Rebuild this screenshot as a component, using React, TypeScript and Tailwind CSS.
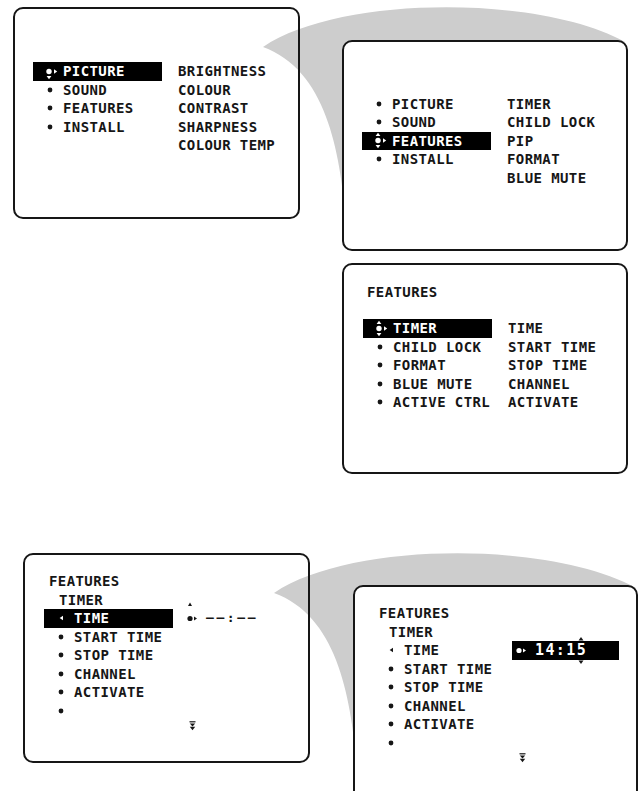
import type {ReactNode} from 'react'

const font = "font-['DejaVu_Sans_Mono',monospace] text-[14px] font-bold tracking-[0.4px] leading-[18.5px] text-[#161616]"

function Bullet() {
  return (
    <svg width="12" height="12" viewBox="0 0 12 12">
      <circle cx="6" cy="6" r="2.4" fill="currentColor" />
    </svg>
  )
}

function Selector({up, down}: {up?: boolean; down?: boolean}) {
  return (
    <svg width="16" height="19" viewBox="0 0 16 19" overflow="visible">
      {up && <path d="M2.6 5 L7.4 5 L5 1.8 Z" fill="currentColor" />}
      <circle cx="5" cy="9.5" r="2.7" fill="currentColor" />
      <path d="M10 7.2 L13.2 9.5 L10 11.8 Z" fill="currentColor" />
      {down && <path d="M2.6 14 L7.4 14 L5 17.2 Z" fill="currentColor" />}
    </svg>
  )
}

function LeftArrow() {
  return (
    <svg width="12" height="12" viewBox="0 0 12 12">
      <path d="M8 3.8 L4.6 6 L8 8.2 Z" fill="currentColor" />
    </svg>
  )
}

function DoubleDown() {
  return (
    <svg width="7" height="10" viewBox="0 0 7 10">
      <path d="M0.5 0.8 L6.5 0.8" stroke="currentColor" strokeWidth="1.2" />
      <path d="M0.8 2.4 L6.2 2.4 L3.5 5.6 Z" fill="currentColor" />
      <path d="M0.8 5.8 L6.2 5.8 L3.5 9.2 Z" fill="currentColor" />
    </svg>
  )
}

function Row({icon, label, active}: {icon: ReactNode; label?: string; active?: boolean}) {
  return (
    <div className={`flex h-[18.5px] w-[129px] items-center ${active ? 'bg-black text-white' : ''}`}>
      <span className="ml-[11px] flex w-[19px] items-center">{icon}</span>
      <span>{label}</span>
    </div>
  )
}

type Item = {label: string; active?: boolean; up?: boolean; down?: boolean}

function MenuLists({items, options}: {items: Item[]; options: string[]}) {
  return (
    <div className="flex">
      <div className="flex flex-col">
        {items.map((it) => (
          <Row
            key={it.label}
            label={it.label}
            active={it.active}
            icon={it.active ? <Selector up={it.up} down={it.down} /> : <Bullet />}
          />
        ))}
      </div>
      <div className="ml-[16px] flex flex-col">
        {options.map((o) => (
          <div key={o} className="h-[18.5px] whitespace-nowrap">
            {o}
          </div>
        ))}
      </div>
    </div>
  )
}

function TimerList({dark}: {dark?: boolean}) {
  const rows = ['START TIME', 'STOP TIME', 'CHANNEL', 'ACTIVATE', '']
  return (
    <div className="flex flex-col">
      <div className="ml-[5px] h-[18.5px]">FEATURES</div>
      <div className="ml-[15px] h-[18.5px]">TIMER</div>
      <Row icon={<LeftArrow />} label="TIME" active={dark} />
      {rows.map((r, i) => (
        <Row key={i} icon={<Bullet />} label={r} />
      ))}
    </div>
  )
}

function Swooshes() {
  const d =
    'M263 47 C340 -5 540 -5 625 42 L400 150 L346 222 C340 150 326 70 263 47 Z'
  return (
    <svg className="pointer-events-none absolute left-0 top-0" width="643" height="791">
      <path d={d} fill="#cdcdcd" />
      <path d={d} fill="#cdcdcd" transform="translate(11 546)" />
    </svg>
  )
}

export default function App() {
  return (
    <div className={`relative h-[791px] w-[643px] overflow-hidden bg-white ${font}`}>
      <Swooshes />

      <div className="flex items-start pl-[13px] pt-[7px]">
        <div className="relative z-10 h-[212px] w-[287px] rounded-[10px] border-2 border-[#161616] pl-[18px] pt-[53px]">
          <MenuLists
            items={[
              {label: 'PICTURE', active: true, down: true},
              {label: 'SOUND'},
              {label: 'FEATURES'},
              {label: 'INSTALL'},
            ]}
            options={['BRIGHTNESS', 'COLOUR', 'CONTRAST', 'SHARPNESS', 'COLOUR TEMP']}
          />
        </div>
        <div className="relative z-10 ml-[42px] mt-[33px] h-[211px] w-[286px] rounded-[10px] border-2 border-[#161616] bg-white pl-[18px] pt-[52.5px]">
          <MenuLists
            items={[
              {label: 'PICTURE'},
              {label: 'SOUND'},
              {label: 'FEATURES', active: true, up: true, down: true},
              {label: 'INSTALL'},
            ]}
            options={['TIMER', 'CHILD LOCK', 'PIP', 'FORMAT', 'BLUE MUTE']}
          />
        </div>
      </div>

      <div className="relative z-10 ml-[342px] mt-[12px] h-[211px] w-[286px] rounded-[10px] border-2 border-[#161616] bg-white pl-[19px] pt-[18px]">
        <div className="ml-[4px] h-[18.5px]">FEATURES</div>
        <div className="mt-[17.5px]">
          <MenuLists
            items={[
              {label: 'TIMER', active: true, up: true, down: true},
              {label: 'CHILD LOCK'},
              {label: 'FORMAT'},
              {label: 'BLUE MUTE'},
              {label: 'ACTIVE CTRL'},
            ]}
            options={['TIME', 'START TIME', 'STOP TIME', 'CHANNEL', 'ACTIVATE']}
          />
        </div>
      </div>

      <div className="mt-[79px] flex items-start pl-[23px]">
        <div className="relative z-10 flex h-[210px] w-[287px] rounded-[10px] border-2 border-[#161616] pl-[19px] pt-[17px]">
          <TimerList dark />
          <div className="ml-[13px] flex flex-col pt-[37px]">
            <div className="flex h-[18.5px] items-center">
              <svg width="12" height="19" viewBox="0 0 12 19" overflow="visible">
                <path d="M2 -3 L6 -3 L4 -6.5 Z" fill="currentColor" />
                <circle cx="4" cy="9.5" r="2.6" fill="currentColor" />
                <path d="M8 7.5 L11 9.5 L8 11.5 Z" fill="currentColor" />
              </svg>
              <span className="ml-[8px] text-[13px] tracking-[2.6px]">––:––</span>
            </div>
            <div className="ml-[3px] mt-[93px]">
              <DoubleDown />
            </div>
          </div>
        </div>
        <div className="relative z-10 ml-[43px] mt-[32px] flex h-[230px] w-[285px] rounded-[10px] border-2 border-[#161616] bg-white pl-[19px] pt-[17px]">
          <TimerList />
          <div className="ml-[9px] flex flex-col pt-[36.5px]">
            <div className="relative flex h-[19px] w-[107px] items-center bg-black pl-[3px] text-white">
              <svg width="12" height="19" viewBox="0 0 12 19">
                <circle cx="4" cy="9.5" r="2.6" fill="currentColor" />
                <path d="M8 7.5 L11 9.5 L8 11.5 Z" fill="currentColor" />
              </svg>
              <span className="ml-[8px] text-[15px] font-semibold tracking-[1.4px]">14:15</span>
              <svg className="absolute left-[66px] top-[-5px] text-[#161616]" width="6" height="5" viewBox="0 0 6 5">
                <path d="M0.5 4.5 L5.5 4.5 L3 1 Z" fill="currentColor" />
              </svg>
              <svg className="absolute left-[66px] top-[19px] text-[#161616]" width="6" height="5" viewBox="0 0 6 5">
                <path d="M0.5 0.5 L5.5 0.5 L3 4 Z" fill="currentColor" />
              </svg>
            </div>
            <div className="ml-[7px] mt-[93px]">
              <DoubleDown />
            </div>
          </div>
        </div>
      </div>
    </div>
  )
}
